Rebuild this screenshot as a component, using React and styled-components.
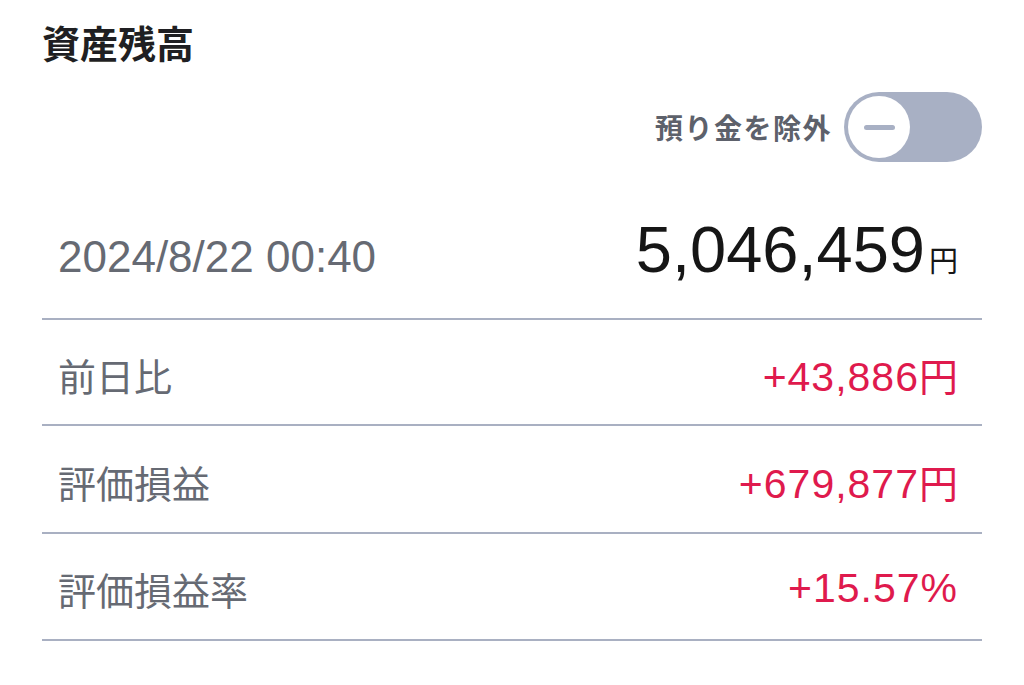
import styled, { createGlobalStyle } from "styled-components";

const GlobalStyle = createGlobalStyle`
  html, body {
    margin: 0;
    padding: 0;
    background: #ffffff;
  }
  body {
    font-family: "Liberation Sans", "Noto Sans CJK JP", sans-serif;
  }
`;

const Page = styled.div`
  box-sizing: border-box;
  width: 1024px;
  padding: 17px 42px 0 42px;
`;

const Title = styled.h1`
  margin: 0;
  font-size: 38px;
  line-height: 49px;
  font-weight: bold;
  color: #1f1f22;
  font-family: "Noto Sans CJK JP", sans-serif;
`;

const ToggleRow = styled.div`
  display: flex;
  justify-content: flex-end;
  align-items: center;
  gap: 12px;
  margin-top: 26px;
`;

const ToggleLabel = styled.span`
  font-family: "Noto Sans CJK JP", sans-serif;
  font-size: 28px;
  font-weight: bold;
  color: #5d616b;
  letter-spacing: 1.5px;
`;

const Track = styled.div`
  box-sizing: border-box;
  width: 138px;
  height: 70px;
  border-radius: 35px;
  background: ${(p) => (p.$on ? "#3b82f6" : "#a8b0c4")};
  padding: 4px;
  display: flex;
  justify-content: ${(p) => (p.$on ? "flex-end" : "flex-start")};
`;

const Knob = styled.div`
  width: 62px;
  height: 62px;
  border-radius: 50%;
  background: #ffffff;
  display: flex;
  align-items: center;
  justify-content: center;
`;

const Minus = styled.span`
  width: 31px;
  height: 5px;
  border-radius: 3px;
  background: #a8b0c4;
`;

const Summary = styled.div`
  display: flex;
  justify-content: space-between;
  align-items: baseline;
  padding: 55px 24px 36px 16px;
  border-bottom: 2px solid #a9b0c2;
`;

const DateText = styled.span`
  font-size: 44px;
  line-height: 1;
  color: #666a73;
`;

const Total = styled.span`
  font-size: 65px;
  line-height: 1;
  color: #161616;
`;

const Yen = styled.span`
  font-family: "Noto Sans CJK JP", sans-serif;
  font-size: 29px;
  margin-left: 4px;
`;

const Row = styled.div`
  box-sizing: border-box;
  height: ${(p) => p.$h || 107}px;
  display: flex;
  justify-content: space-between;
  align-items: center;
  padding: 4px 24px 0 16px;
  border-bottom: 2px solid #a9b0c2;
`;

const Label = styled.span`
  font-family: "Noto Sans CJK JP", sans-serif;
  font-size: 38px;
  color: #666a73;
`;

const Value = styled.span`
  font-size: 41px;
  color: ${(p) => (p.$positive ? "#df1a4d" : "#1f6fd1")};
  letter-spacing: 1px;
  span {
    font-family: "Noto Sans CJK JP", sans-serif;
    font-size: 39px;
    letter-spacing: 0;
  }
`;

const rows = [
  { label: "前日比", value: "+43,886", unit: "円", h: 106 },
  { label: "評価損益", value: "+679,877", unit: "円", h: 108 },
  { label: "評価損益率", value: "+15.57%", unit: "", h: 107 },
];

const App = () => {
  return (
    <>
      <GlobalStyle />
      <Page>
        <Title>資産残高</Title>
        <ToggleRow>
          <ToggleLabel>預り金を除外</ToggleLabel>
          <Track>
            <Knob>
              <Minus />
            </Knob>
          </Track>
        </ToggleRow>
        <Summary>
          <DateText>2024/8/22 00:40</DateText>
          <Total>
            5,046,459<Yen>円</Yen>
          </Total>
        </Summary>
        {rows.map((r) => (
          <Row key={r.label} $h={r.h}>
            <Label>{r.label}</Label>
            <Value $positive>
              {r.value}
              {r.unit && <span>{r.unit}</span>}
            </Value>
          </Row>
        ))}
      </Page>
    </>
  );
};

export default App;
